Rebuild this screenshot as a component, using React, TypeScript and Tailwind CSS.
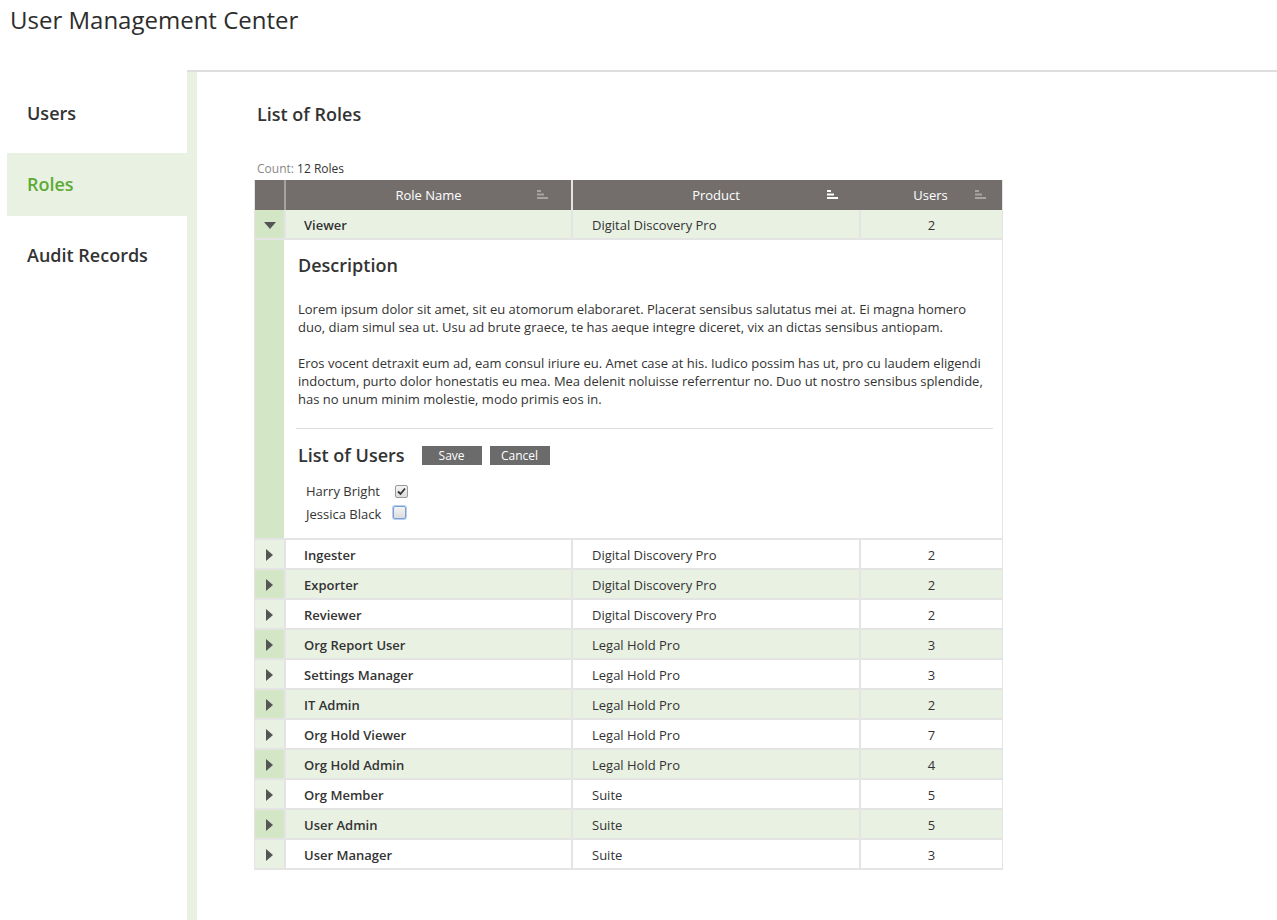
import React from "react";

interface Role {
  name: string;
  product: string;
  users: number;
}

const roles: Role[] = [
  { name: "Viewer", product: "Digital Discovery Pro", users: 2 },
  { name: "Ingester", product: "Digital Discovery Pro", users: 2 },
  { name: "Exporter", product: "Digital Discovery Pro", users: 2 },
  { name: "Reviewer", product: "Digital Discovery Pro", users: 2 },
  { name: "Org Report User", product: "Legal Hold Pro", users: 3 },
  { name: "Settings Manager", product: "Legal Hold Pro", users: 3 },
  { name: "IT Admin", product: "Legal Hold Pro", users: 2 },
  { name: "Org Hold Viewer", product: "Legal Hold Pro", users: 7 },
  { name: "Org Hold Admin", product: "Legal Hold Pro", users: 4 },
  { name: "Org Member", product: "Suite", users: 5 },
  { name: "User Admin", product: "Suite", users: 5 },
  { name: "User Manager", product: "Suite", users: 3 },
];

const SortIcon: React.FC<{ active?: boolean }> = ({ active }) => (
  <svg width="11" height="9" viewBox="0 0 11 9" className={active ? "fill-white" : "fill-[#a9a4a2]"}>
    <rect x="0" y="0" width="4" height="2" />
    <rect x="0" y="3.5" width="7" height="2" />
    <rect x="0" y="7" width="11" height="2" />
  </svg>
);

const Arrow: React.FC<{ open?: boolean }> = ({ open }) =>
  open ? (
    <svg width="12" height="7" viewBox="0 0 12 7">
      <path d="M0 0 L12 0 L6 7 Z" fill="#555" />
    </svg>
  ) : (
    <svg width="7" height="12" viewBox="0 0 7 12">
      <path d="M0 0 L7 6 L0 12 Z" fill="#555" />
    </svg>
  );

const Checkbox: React.FC<{ checked?: boolean; focused?: boolean }> = ({ checked, focused }) => (
  <span
    className={
      "inline-flex items-center justify-center w-[13px] h-[13px] rounded-[2px] bg-gradient-to-b from-[#f4f4f4] to-[#dcdcdc] " +
      (focused ? "border border-[#7a9fd6] shadow-[0_0_0_1px_#b9cff0]" : "border border-[#9a9a9a]")
    }
  >
    {checked && (
      <svg width="9" height="9" viewBox="0 0 9 9">
        <path d="M1 4.5 L3.5 7 L8 1.5" stroke="#333" strokeWidth="1.8" fill="none" />
      </svg>
    )}
  </span>
);

const RoleRow: React.FC<{ role: Role; index: number; open?: boolean }> = ({ role, index, open }) => {
  const green = index % 2 === 0;
  return (
    <div className={"flex h-[30px] border-b-2 border-[#e4e4e4] text-[13px] " + (green ? "bg-[#e9f1e3]" : "bg-white")}>
      <div className={"w-[29px] flex items-center justify-center pt-[2px] " + (green ? "bg-[#d3e6c6]" : "bg-[#e9f1e3]")}>
        <Arrow open={open} />
      </div>
      <div className="w-[287px] border-l-2 border-[#e4e4e4] pl-[18px] pt-[3px] flex items-center font-semibold text-[#333]">
        {role.name}
      </div>
      <div className="w-[288px] border-l-2 border-[#e4e4e4] pl-[19px] pt-[3px] flex items-center text-[#333]">
        {role.product}
      </div>
      <div className="flex-1 border-l-2 border-[#e4e4e4] pt-[3px] flex items-center justify-center text-[#333]">
        {role.users}
      </div>
    </div>
  );
};

const Expanded: React.FC = () => (
  <div className="flex border-b-2 border-[#e4e4e4]">
    <div className="w-[29px] bg-[#d3e6c6]" />
    <div className="flex-1 bg-white px-[12px] pt-[13px] pb-[15px] text-[#333]">
      <h3 className="px-[2px] text-[18px] leading-[24px] font-semibold">Description</h3>
      <div className="px-[2px] mt-[23px] text-[13px] leading-[18px]">
        <p>
          Lorem ipsum dolor sit amet, sit eu atomorum elaboraret. Placerat sensibus salutatus mei at. Ei magna homero
          duo, diam simul sea ut. Usu ad brute graece, te has aeque integre diceret, vix an dictas sensibus antiopam.
        </p>
        <p className="mt-[18px]">
          Eros vocent detraxit eum ad, eam consul iriure eu. Amet case at his. Iudico possim has ut, pro cu laudem eligendi
          indoctum, purto dolor honestatis eu mea. Mea delenit noluisse referrentur no. Duo ut nostro sensibus splendide,
          has no unum minim molestie, modo primis eos in.
        </p>
      </div>
      <div className="mt-[20px] mr-[-3px] border-t border-[#dedede]" />
      <div className="mt-[14px] px-[2px] flex items-center">
        <h3 className="text-[18px] leading-[24px] font-semibold">List of Users</h3>
        <button className="ml-[17px] w-[60px] h-[19px] bg-[#6b6b6b] text-white text-[12px] leading-[19px]">Save</button>
        <button className="ml-[8px] w-[60px] h-[19px] bg-[#6b6b6b] text-white text-[12px] leading-[19px]">Cancel</button>
      </div>
      <div className="mt-[15px] pl-[10px] text-[13px] leading-[18px] flex flex-col gap-[5px]">
        <label className="flex items-center">
          <span>Harry Bright</span>
          <span className="ml-[15px]">
            <Checkbox checked />
          </span>
        </label>
        <label className="flex items-center">
          <span>Jessica Black</span>
          <span className="ml-[12px]">
            <Checkbox focused />
          </span>
        </label>
      </div>
    </div>
  </div>
);

const App: React.FC = () => {
  return (
    <div className="min-h-[920px] bg-white font-['Open_Sans',sans-serif] text-[#333]">
      <div className="h-[70px] pl-[10px] pt-[4px] text-[24px] leading-[32px] text-[#2d2d2d]">User Management Center</div>
      <div className="flex">
        <div className="w-[187px] pt-[12px] flex flex-col gap-[8px]">
          <div className="ml-[7px] h-[63px] pl-[20px] flex items-center text-[18px] font-semibold text-[#333]">Users</div>
          <div className="ml-[7px] h-[63px] pl-[20px] flex items-center text-[18px] font-semibold text-[#5cab36] bg-[#e9f1e3]">
            Roles
          </div>
          <div className="ml-[7px] h-[63px] pl-[20px] flex items-center text-[18px] font-semibold text-[#333]">
            Audit Records
          </div>
        </div>
        <div className="flex-1 border-t-2 border-[#dedede] flex min-h-[850px]">
          <div className="w-[10px] bg-[#e9f1e3]" />
          <div className="flex-1 pl-[57px] pt-[30px]">
            <h2 className="ml-[3px] text-[18px] leading-[24px] font-semibold text-[#333]">List of Roles</h2>
            <div className="ml-[3px] mt-[35px] text-[12px] leading-[16px]">
              <span className="text-[#888]">Count:</span> <span className="text-[#333]">12 Roles</span>
            </div>
            <div className="mt-[3px] w-[749px] border-x border-[#e4e4e4]">
              <div className="flex h-[30px] bg-[#736e6c] text-white text-[13px]">
                <div className="w-[29px]" />
                <div className="w-[287px] border-l-2 border-[#a6a2a0] relative flex items-center justify-center pt-[2px]">
                  Role Name
                  <span className="absolute right-[23px] top-[10px] flex">
                    <SortIcon />
                  </span>
                </div>
                <div className="w-[288px] border-l-2 border-[#e4e4e4] relative flex items-center justify-center pt-[2px]">
                  Product
                  <span className="absolute right-[21px] top-[10px] flex">
                    <SortIcon active />
                  </span>
                </div>
                <div className="flex-1 relative flex items-center justify-center pt-[2px]">
                  Users
                  <span className="absolute right-[16px] top-[10px] flex">
                    <SortIcon />
                  </span>
                </div>
              </div>
              {roles.map((role, i) => (
                <React.Fragment key={role.name}>
                  <RoleRow role={role} index={i} open={i === 0} />
                  {i === 0 && <Expanded />}
                </React.Fragment>
              ))}
            </div>
          </div>
        </div>
      </div>
    </div>
  );
};

export default App;
